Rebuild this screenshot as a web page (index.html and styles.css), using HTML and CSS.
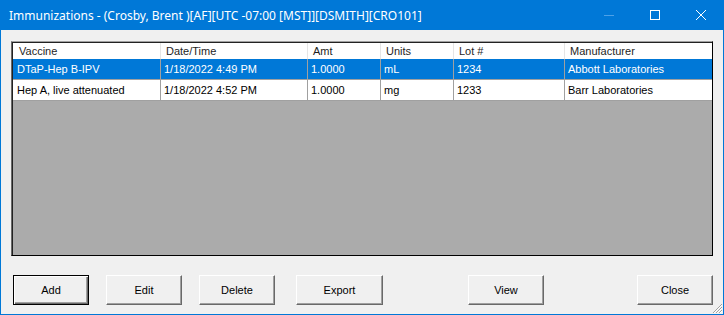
FILE: index.html
```html
<!DOCTYPE html>
<html lang="en">
<head>
  <meta charset="UTF-8">
  <title>Immunizations</title>
  <link rel="stylesheet" href="styles.css">
</head>
<body>

  <div class="window">
    <!-- Title bar -->
    <div class="titlebar">
      <span class="title">Immunizations - (Crosby, Brent )[AF][UTC -07:00 [MST]][DSMITH][CRO101]</span>
      <div class="caption-buttons">
        <span class="cap cap-min">
          <svg width="10" height="10" viewBox="0 0 10 10"><path d="M0 5.5h10" stroke="#4da1e8" stroke-width="1"/></svg>
        </span>
        <span class="cap">
          <svg width="10" height="10" viewBox="0 0 10 10"><rect x="0.5" y="0.5" width="9" height="9" fill="none" stroke="#fff" stroke-width="1"/></svg>
        </span>
        <span class="cap">
          <svg width="10" height="10" viewBox="0 0 10 10"><path d="M0 0L10 10M10 0L0 10" stroke="#fff" stroke-width="1"/></svg>
        </span>
      </div>
    </div>

    <div class="client">
      <!-- List of immunizations -->
      <div class="listbox">
        <div class="list-row list-header">
          <div class="cell">Vaccine</div>
          <div class="cell">Date/Time</div>
          <div class="cell">Amt</div>
          <div class="cell">Units</div>
          <div class="cell">Lot #</div>
          <div class="cell">Manufacturer</div>
        </div>
        <div class="list-row selected">
          <div class="cell">DTaP-Hep B-IPV</div>
          <div class="cell">1/18/2022 4:49 PM</div>
          <div class="cell">1.0000</div>
          <div class="cell">mL</div>
          <div class="cell">1234</div>
          <div class="cell">Abbott Laboratories</div>
        </div>
        <div class="list-row">
          <div class="cell">Hep A, live attenuated</div>
          <div class="cell">1/18/2022 4:52 PM</div>
          <div class="cell">1.0000</div>
          <div class="cell">mg</div>
          <div class="cell">1233</div>
          <div class="cell">Barr Laboratories</div>
        </div>
      </div>

      <!-- Buttons -->
      <div class="button-row">
        <button type="button" class="btn default">Add</button>
        <button type="button" class="btn">Edit</button>
        <button type="button" class="btn">Delete</button>
        <button type="button" class="btn wide">Export</button>
        <button type="button" class="btn view">View</button>
        <button type="button" class="btn close">Close</button>
      </div>

      <svg class="grip" width="12" height="12" viewBox="0 0 12 12">
        <path d="M11 2L2 11M11 5L5 11M11 8L8 11" stroke="#a0a0a0" stroke-width="1"/>
        <path d="M11 3L3 11M11 6L6 11M11 9L9 11" stroke="#fff" stroke-width="1"/>
      </svg>
    </div>
  </div>

</body>
</html>
```

FILE: styles.css
```css
body {
  margin: 0;
  padding: 0;
  background-color: #f0f0f0;
  font-family: "Liberation Sans", Arial, sans-serif;
  font-size: 11px;
}
.window {
  width: 724px;
  height: 315px;
  box-sizing: border-box;
  border: 1px solid #0078d7;
  border-top: none;
  display: flex;
  flex-direction: column;
}
.titlebar {
  height: 30px;
  background-color: #0078d7;
  color: white;
  display: flex;
  align-items: center;
  margin: 0 -1px;
}
.title {
  font-family: "Noto Sans", sans-serif;
  font-size: 12px;
  padding-left: 9px;
  flex: 1;
  white-space: nowrap;
}
.caption-buttons {
  display: flex;
  height: 30px;
}
.cap {
  width: 46px;
  display: flex;
  align-items: center;
  justify-content: center;
}
.client {
  flex: 1;
  position: relative;
  padding: 11px 10px 0 10px;
}
.listbox {
  height: 215px;
  box-sizing: border-box;
  border: 1px solid #000;
  border-top-color: #a0a0a0;
  border-left-color: #696969;
  box-shadow: inset 1px 1px #222;
  padding: 1px 0 0 1px;
  background-color: #ababab;
}
.list-row {
  display: grid;
  grid-template-columns: 147px 147px 73px 73px 111px 147px;
  height: 20px;
  background-color: white;
  border-bottom: 1px solid #a0a0a0;
  color: #000;
}
.list-row .cell {
  padding-left: 3px;
  line-height: 20px;
  white-space: nowrap;
  overflow: hidden;
  border-left: 1px solid #a0a0a0;
}
.list-row .cell:first-child {
  border-left: none;
  padding-left: 4px;
}
.list-header {
  height: 16px;
  border-bottom: none;
  color: #1e1e1e;
}
.list-header .cell {
  line-height: 16px;
  padding-left: 5px;
  border-left-color: #e5e5e5;
}
.list-header .cell:first-child {
  padding-left: 6px;
}
.selected {
  background-color: #0078d7;
  color: white;
}
.button-row {
  display: flex;
  margin-top: 19px;
  padding-left: 2px;
}
.btn {
  width: 76px;
  height: 30px;
  box-sizing: border-box;
  margin-right: 17px;
  background-color: #f0f0f0;
  font-family: "Liberation Sans", Arial, sans-serif;
  font-size: 11px;
  color: #000;
  border: 1px solid;
  border-color: #fff #696969 #696969 #fff;
  box-shadow: inset -1px -1px #a0a0a0;
  padding: 0;
}
.btn.default {
  border-color: #000;
  box-shadow: inset 1px 1px #fff, inset -1px -1px #696969, inset -2px -2px #a0a0a0;
}
.btn.wide {
  width: 87px;
  margin-left: 4px;
}
.btn.view {
  margin-left: 68px;
}
.btn.close {
  margin-left: auto;
  margin-right: 0;
}
.grip {
  position: absolute;
  right: 0;
  bottom: 0;
}
```
